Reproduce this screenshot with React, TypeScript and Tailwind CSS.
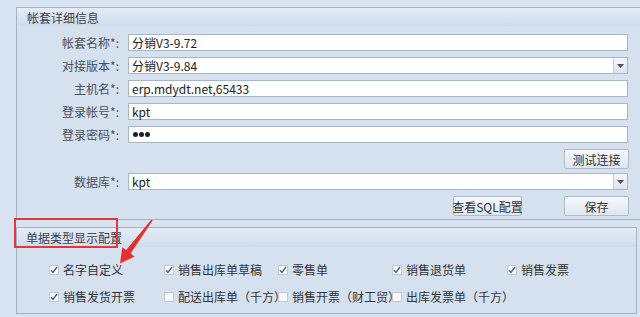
import React from 'react';

const font = { fontFamily: '"Noto Sans CJK SC", "Noto Sans", sans-serif' };

interface FieldRowProps {
  label: string;
  value: string;
  dropdown?: boolean;
  password?: boolean;
}

const DropButton: React.FC = () => (
  <div className="flex h-full w-[14px] items-center justify-center border-l border-[#c3ccd8] bg-gradient-to-b from-[#f4f7fb] to-[#dfe6f0]">
    <svg width="7" height="4" viewBox="0 0 7 4">
      <path d="M0 0 H7 L3.5 4 Z" fill="#4a5462" />
    </svg>
  </div>
);

const FieldRow: React.FC<FieldRowProps> = ({ label, value, dropdown, password }) => (
  <div className="flex h-[17px] items-center">
    <div className="w-[103px] whitespace-nowrap pr-[1px] text-right text-[12px] leading-[15px] text-[#4b4f56]">{label}</div>
    <div className="ml-[8px] flex h-[17px] w-[500px] items-center border border-[#a9b5c5] bg-[#fdfefe]">
      <div className="flex-1 whitespace-nowrap pl-[3px] text-[12px] leading-[15px] text-[#222]">
        {password ? (
          <div className="flex items-center gap-[1px] pl-[1px]">
            <span className="h-[5px] w-[5px] rounded-full bg-[#1f1f1f]" />
            <span className="h-[5px] w-[5px] rounded-full bg-[#1f1f1f]" />
            <span className="h-[5px] w-[5px] rounded-full bg-[#1f1f1f]" />
          </div>
        ) : (
          value
        )}
      </div>
      {dropdown && <DropButton />}
    </div>
  </div>
);

const Btn: React.FC<{ children: React.ReactNode; w: string }> = ({ children, w }) => (
  <div
    className={`flex h-[20px] ${w} items-center justify-center whitespace-nowrap rounded-[2px] border border-[#aebbcc] bg-gradient-to-b from-[#f6f8fb] to-[#dfe6ef] text-[12px] leading-[15px] text-[#333]`}
  >
    {children}
  </div>
);

const Check: React.FC<{ label: string; checked?: boolean }> = ({ label, checked }) => (
  <div className="flex items-center gap-[4px] whitespace-nowrap">
    <div className="flex h-[10px] w-[10px] shrink-0 items-center justify-center border border-[#c0c8d3] bg-[#f7f9fc]">
      {checked && (
        <svg width="8" height="8" viewBox="0 0 8 8">
          <path d="M1 4.2 L3 6.5 L7 1" stroke="#555c66" strokeWidth="1.3" fill="none" />
        </svg>
      )}
    </div>
    <span className="text-[12px] leading-[15px] text-[#333]">{label}</span>
  </div>
);

export default function App() {
  return (
    <div className="relative h-[317px] w-[640px] overflow-hidden bg-[#d8e3f1]" style={font}>
      <div className="pl-[16px] pt-[7px]">
        {/* account details panel */}
        <div className="border-l border-t border-b border-[#a3b2c6] bg-[#d6e1f0]">
          <div className="flex h-[18px] items-center bg-gradient-to-b from-[#e4ecf7] to-[#d0dcee] pl-[10px] text-[12px] leading-[15px] text-[#3d4148]">
            帐套详细信息
          </div>
          <div className="flex flex-col pb-[3px] pt-[8px]">
            <div className="flex flex-col gap-[6px]">
              <FieldRow label="帐套名称*:" value="分销V3-9.72" />
              <FieldRow label="对接版本*:" value="分销V3-9.84" dropdown />
              <FieldRow label="主机名*:" value="erp.mdydt.net,65433" />
              <FieldRow label="登录帐号*:" value="kpt" />
              <FieldRow label="登录密码*:" value="" password />
            </div>
            <div className="mt-[6px] flex w-[612px] justify-end">
              <Btn w="w-[65px]">测试连接</Btn>
            </div>
            <div className="mt-[4px]">
              <FieldRow label="数据库*:" value="kpt" dropdown />
            </div>
            <div className="mt-[6px] flex w-[612px] justify-end gap-[42px]">
              <Btn w="w-[69px]">查看SQL配置</Btn>
              <Btn w="w-[65px]">保存</Btn>
            </div>
          </div>
        </div>

        {/* document type panel */}
        <div className="mt-[7px] w-[621px] border border-[#a3b2c6] bg-[#d6e1f0]">
          <div className="flex h-[19px] items-center bg-gradient-to-b from-[#e4ecf7] to-[#d0dcee] pl-[9px] text-[12px] leading-[15px] text-[#3d4148]">
            单据类型显示配置
          </div>
          <div className="grid grid-cols-[115px_114px_114px_115px_100px] gap-y-[12px] pb-[9px] pl-[32px] pt-[15px]">
            <Check label="名字自定义" checked />
            <Check label="销售出库单草稿" checked />
            <Check label="零售单" checked />
            <Check label="销售退货单" checked />
            <Check label="销售发票" checked />
            <Check label="销售发货开票" checked />
            <Check label="配送出库单（千方）" />
            <Check label="销售开票（财工贸）" />
            <Check label="出库发票单（千方）" />
          </div>
        </div>
      </div>

      {/* annotation: red box and arrow */}
      <div className="absolute left-[14px] top-[218px] h-[30px] w-[104px] border-2 border-[#e0393b]" />
      <svg className="absolute left-[110px] top-[215px]" width="50" height="55" viewBox="0 0 50 55">
        <path
          d="M42.6 5.4 L20.6 38.6 L24.6 41.6 L10 48.5 L12.3 32.2 L16.2 35.1 L41.4 4.6 Z"
          fill="#e5302c"
        />
      </svg>
    </div>
  );
}
